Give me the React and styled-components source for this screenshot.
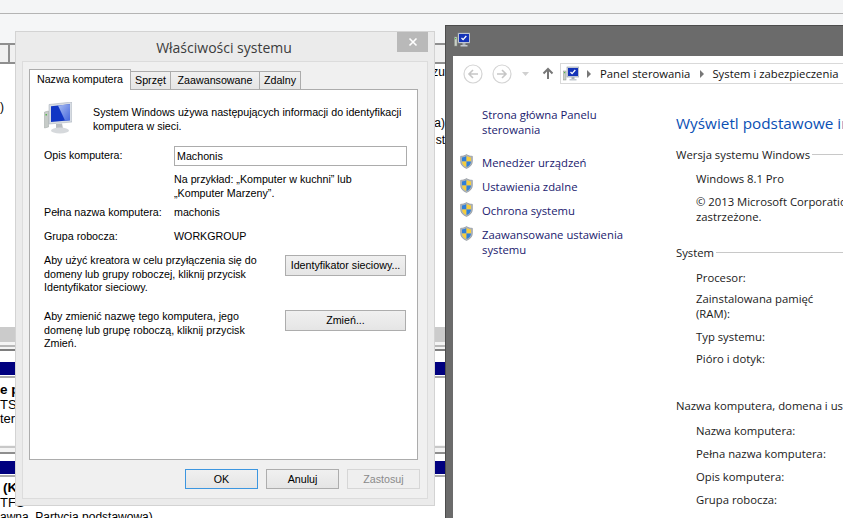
import styled, { createGlobalStyle } from 'styled-components';

const Global = createGlobalStyle`
  html, body {
    margin: 0;
    padding: 0;
    background: #fff;
  }
  #root {
    width: 843px;
    height: 518px;
    overflow: hidden;
  }
`;

const Desktop = styled.div`
  position: relative;
  width: 843px;
  height: 518px;
  overflow: hidden;
  font-family: "Liberation Sans", Arial, sans-serif;
  font-size: 10.7px;
  color: #000;
`;

/* the window left open behind the two others */
const BackWindow = styled.div`
  display: flex;
  flex-direction: column;
  height: 100%;
  background: #fff;
`;

const TopStrip = styled.div`
  height: 13px;
  background: #f4f5f6;
  border-bottom: 1px solid #b4b4b4;
`;

const MenuBand = styled.div`
  height: 29px;
  background: #f5f6f7;
`;

const ColumnHeaders = styled.div`
  display: flex;
  height: 17px;
  border-top: 2px solid #8f8f8f;
  border-bottom: 2px solid #8f8f8f;
`;

const ColumnHeader = styled.div`
  width: ${p => p.$width}px;
  background: #f0f0f0;
  border-right: 2px solid #8f8f8f;
  flex: ${p => (p.$grow ? 1 : 'none')};
`;

const ListArea = styled.div`
  display: flex;
  justify-content: space-between;
  height: 263px;
  padding-right: 398px;
  font-size: 12px;
`;

const ListLeft = styled.div`
  padding-top: 36px;
  line-height: 15px;
`;

const ListRight = styled.div`
  display: flex;
  flex-direction: column;
  align-items: flex-end;
  line-height: 15px;
  gap: 36px;
  padding-top: 1px;
`;

const ListRightPair = styled.div`
  display: flex;
  flex-direction: column;
  align-items: flex-end;
  gap: 2px;
`;

const GreyBand = styled.div`
  height: 15px;
  background: #cbcbcb;
`;

const PartBar = styled.div`
  height: ${p => p.$height}px;
  border-bottom: 2px solid ${p => p.$line};
  background: #f4f4f4;
`;

const DiskBar = styled.div`
  height: 13px;
  background: #00007f;
`;

const DiskRule = styled.div`
  height: 2px;
  background: #ababab;
  margin-top: 1px;
`;

const DiskInfo = styled.div`
  height: ${p => p.$height}px;
  padding-top: ${p => p.$top || 0}px;
  font-size: 13px;
  line-height: 14.5px;
  box-sizing: border-box;
`;

const DiskTitle = styled.div`
  font-weight: bold;
  font-size: 13.5px;
  margin-left: ${p => p.$shift}px;
`;

const DiskLine = styled.div`
  white-space: nowrap;
  font-size: ${p => p.$size || 13}px;
`;

/* system properties dialog */
const Dialog = styled.div`
  position: absolute;
  left: 15px;
  top: 31px;
  width: 420px;
  height: 475px;
  box-sizing: border-box;
  display: flex;
  flex-direction: column;
  background: #ebebeb;
  border: 1px solid #d3d3d3;
`;

const DialogTitleBar = styled.div`
  position: relative;
  height: 29px;
  display: flex;
  align-items: center;
  justify-content: center;
  flex: none;
  font-family: "Open Sans", sans-serif;
  font-size: 14px;
  color: #3c3c3c;
  padding-right: 2px;
  padding-top: 1px;
  box-sizing: border-box;
`;

const CloseButton = styled.div`
  position: absolute;
  right: 6px;
  top: 0;
  width: 31px;
  height: 20px;
  background: #b9b9b9;
  display: flex;
  align-items: center;
  justify-content: center;
`;

const DialogFrame = styled.div`
  flex: 1;
  margin: 0 6px 6px;
  padding: 7px 9px 0 6px;
  background: #f0f0f0;
  border: 1px solid #dcdcdc;
  display: flex;
  flex-direction: column;
`;

const TabRow = styled.div`
  display: flex;
  align-items: flex-end;
  height: 21px;
  position: relative;
  z-index: 1;
  margin-bottom: -1px;
`;

const Tab = styled.div`
  box-sizing: border-box;
  height: ${p => (p.$active ? 21 : 19)}px;
  width: ${p => p.$width}px;
  margin-left: ${p => (p.$active ? 0 : -1)}px;
  border: 1px solid #acacac;
  border-bottom: ${p => (p.$active ? 'none' : '1px solid #acacac')};
  background: ${p => (p.$active ? '#fff' : 'linear-gradient(#f0f0f0, #e5e5e5)')};
  text-align: center;
  line-height: ${p => (p.$active ? 18 : 17)}px;
  position: relative;
  z-index: ${p => (p.$active ? 2 : 0)};
`;

const TabPanel = styled.div`
  height: 371px;
  box-sizing: border-box;
  background: #fff;
  border: 1px solid #acacac;
  padding: 16px 10px 0 14px;
  line-height: 13.5px;
`;

const IntroRow = styled.div`
  display: flex;
  gap: 21px;
  margin-bottom: 12px;
  white-space: nowrap;
`;

const ComputerArt = styled.svg`
  width: 28px;
  height: 32px;
  flex: none;
  margin-top: -4px;
`;

const FieldRow = styled.div`
  display: grid;
  grid-template-columns: 130px 1fr;
  align-items: center;
  margin-bottom: ${p => p.$gap || 0}px;
`;

const TextField = styled.div`
  height: 20px;
  box-sizing: border-box;
  border: 1px solid #acacac;
  padding-left: 2px;
  line-height: 18px;
`;

const Hint = styled.div`
  margin-left: 130px;
  line-height: 14px;
  margin-bottom: 6px;
`;

const ActionRow = styled.div`
  display: grid;
  grid-template-columns: 241px 121px;
  margin-bottom: 15.5px;
  align-items: start;
  white-space: nowrap;
`;

const PushButton = styled.div`
  box-sizing: border-box;
  height: ${p => p.$height || 20}px;
  border: 1px solid ${p => (p.$disabled ? '#d6d6d6' : p.$primary ? '#3c96e0' : '#adadad')};
  background: ${p => (p.$disabled ? '#efefef' : 'linear-gradient(#f0f0f0, #e5e5e5)')};
  color: ${p => (p.$disabled ? '#8a8a8a' : '#000')};
  text-align: center;
  line-height: ${p => (p.$height || 20) - 2}px;
  margin-top: ${p => p.$offset || 0}px;
`;

const DialogButtons = styled.div`
  display: grid;
  grid-template-columns: repeat(3, 73px);
  gap: 8px;
  justify-content: end;
  margin: 9px -2px 0 0;
`;

/* control panel window */
const PanelWindow = styled.div`
  position: absolute;
  left: 445px;
  top: 25px;
  width: 420px;
  height: 493px;
  box-sizing: border-box;
  background: #6b6b6b;
  border-left: 1px solid #4c4c4c;
  border-top: 1px solid #4c4c4c;
  padding-left: 7px;
  display: flex;
  flex-direction: column;
  font-family: "Open Sans", sans-serif;
  font-size: 11.3px;
  color: #1a1a1a;
`;

const PanelTitle = styled.div`
  height: 30px;
  flex: none;
  display: flex;
  align-items: flex-start;
  padding: 6px 0 0 1px;
  box-sizing: border-box;
`;

const PanelBody = styled.div`
  flex: 1;
  background: #fff;
  display: flex;
  flex-direction: column;
  overflow: hidden;
`;

const NavBar = styled.div`
  display: flex;
  align-items: center;
  height: 21px;
  margin-top: 7px;
  padding-left: 10px;
  flex: none;

  > * {
    flex: none;
  }
`;

const NavCircle = styled.svg`
  width: 20px;
  height: 20px;
  margin-right: ${p => p.$gap}px;
`;

const AddressBar = styled.div`
  box-sizing: border-box;
  width: 320px;
  height: 21px;
  margin-left: 6px;
  border: 1px solid #d9d9d9;
  display: flex;
  align-items: center;
  padding-left: 2px;
  white-space: nowrap;
  color: #111;
`;

const Crumb = styled.span`
  margin-right: 7px;
`;

const CrumbArrow = styled.span`
  width: 0;
  height: 0;
  margin: 0 ${p => (p.$first ? 9 : 8)}px 0 ${p => (p.$first ? 8 : 3)}px;
  border-left: 4px solid #777;
  border-top: 4px solid transparent;
  border-bottom: 4px solid transparent;
`;

const PanelColumns = styled.div`
  display: flex;
  flex: 1;
`;

const SideBar = styled.nav`
  width: 223px;
  flex: none;
  box-sizing: border-box;
  padding: 23px 20px 0 7px;
  color: #1a1a6e;
  line-height: 15px;
`;

const SideHome = styled.div`
  padding-left: 22px;
  margin-bottom: 18px;
  width: 140px;
`;

const SideLink = styled.div`
  display: flex;
  gap: 9px;
  margin-bottom: 9px;
  width: 190px;
`;

const Shield = styled.svg`
  width: 13px;
  height: 15px;
  flex: none;
  margin-top: -1px;
`;

const MainContent = styled.main`
  width: 340px;
  flex: none;
  padding-top: 27px;
  line-height: 15px;
  white-space: nowrap;
`;

const MainHeading = styled.h1`
  margin: 0 0 11.5px;
  font-size: 15.3px;
  font-weight: 400;
  line-height: 24px;
  color: #0a50b4;
`;

const SectionHead = styled.div`
  display: flex;
  align-items: center;
  gap: 2px;
  margin-bottom: ${p => p.$gap}px;

  &::after {
    content: '';
    flex: 1;
    height: 1px;
    background: #c8c8c8;
  }
`;

const InfoBlock = styled.div`
  padding-left: 20px;
  margin-bottom: ${p => p.$gap}px;
`;

const InfoLine = styled.div`
  margin-bottom: ${p => p.$gap ?? 8}px;
  width: ${p => p.$width || 'auto'};
  white-space: ${p => (p.$wrap ? 'normal' : 'nowrap')};
`;

const ComputerSmall = ({ size = 16 }) => (
  <svg width={size} height={size} viewBox="0 0 16 16" style={{ flex: 'none' }}>
    <rect x="0.5" y="5" width="2.5" height="9" fill="#c9cfc6" stroke="#8d948c" strokeWidth="0.5" />
    <rect x="1" y="6" width="1.2" height="1.2" fill="#4fb848" />
    <rect x="4" y="1" width="12" height="10" fill="#d5dbe3" stroke="#8b95a5" strokeWidth="0.6" />
    <rect x="5" y="2" width="10" height="8" fill="#1433b8" />
    <path d="M7.5 6l1.6 1.6 3.2-3.6" fill="none" stroke="#fff" strokeWidth="1.3" />
    <rect x="8.5" y="11" width="3" height="2" fill="#a9b0b8" />
    <rect x="6.5" y="13" width="7" height="1.5" fill="#c4c9cf" />
  </svg>
);

const ShieldIcon = () => (
  <Shield viewBox="0 0 13 15">
    <path d="M6.5 0.5C4.8 1.7 2.8 2.2 0.6 2.3V7.5c0 3.2 2.4 5.6 5.9 7 3.5-1.4 5.9-3.8 5.9-7V2.3C10.2 2.2 8.2 1.7 6.5 0.5z" fill="#aeb4ba" stroke="#7b8188" strokeWidth="0.5" />
    <path d="M6.5 2C5.2 2.8 3.6 3.3 2 3.4V7.5h4.5z" fill="#2f7fd8" />
    <path d="M6.5 2c1.3.8 2.9 1.3 4.5 1.4V7.5H6.5z" fill="#f6cd3c" />
    <path d="M2 7.5h4.5v5.6C4 12 2 10.2 2 7.5z" fill="#f6cd3c" />
    <path d="M11 7.5H6.5v5.6C9 12 11 10.2 11 7.5z" fill="#2f7fd8" />
  </Shield>
);

const NavButton = ({ flip, gap }) => (
  <NavCircle viewBox="0 0 20 20" $gap={gap}>
    <circle cx="10" cy="10" r="9" fill="#fff" stroke="#d4d4d4" strokeWidth="1.2" />
    <path
      d={flip ? 'M5 10h9M10 6l4 4-4 4' : 'M15 10H6M10 6l-4 4 4 4'}
      fill="none"
      stroke="#c6c6c6"
      strokeWidth="1.6"
    />
  </NavCircle>
);

const Monitor = () => (
  <ComputerArt viewBox="0 0 28 32">
    <defs>
      <linearGradient id="screenShine" x1="0" y1="0" x2="1" y2="1">
        <stop offset="0" stopColor="#a9bdf2" />
        <stop offset="1" stopColor="#4668dc" />
      </linearGradient>
    </defs>
    <path d="M0.5 10l4-1v16l-4 1z" fill="#c6cbc8" stroke="#9ca3a0" strokeWidth="0.5" />
    <rect x="1.5" y="12" width="1.5" height="1.5" fill="#58b84f" />
    <path d="M5 2.5L28 0v20L5 22z" fill="#d8dde4" stroke="#a1a8b3" strokeWidth="0.5" />
    <path d="M7 4.2L26 2.2v16L7 20z" fill="#1136c4" />
    <path d="M14 3.5l12-1.3v16l-5 .4z" fill="url(#screenShine)" />
    <path d="M12 22l6-.5 1 5-7 .5z" fill="#b9bdc2" />
    <ellipse cx="16" cy="28.5" rx="9" ry="3" fill="#d6d9dc" />
  </ComputerArt>
);

export default function App() {
  return (
    <Desktop>
      <Global />
      <BackWindow>
        <TopStrip />
        <MenuBand />
        <ColumnHeaders>
          <ColumnHeader $width={8} />
          <ColumnHeader $grow />
        </ColumnHeaders>
        <ListArea>
          <ListLeft>)</ListLeft>
          <ListRight>
            <div>zu</div>
            <ListRightPair>
              <div>a)</div>
              <div>st</div>
            </ListRightPair>
          </ListRight>
        </ListArea>
        <GreyBand />
        <PartBar $height={3} $line="#b8b8b8" />
        <PartBar $height={2} $line="#7e7e7e" />
        <DiskInfo $height={11} />
        <DiskBar />
        <DiskRule />
        <DiskInfo $height={67} $top={5}>
          <DiskTitle $shift={0}>e p</DiskTitle>
          <DiskLine>TS</DiskLine>
          <DiskLine>ter</DiskLine>
        </DiskInfo>
        <PartBar $height={1} $line="#c8c8c8" />
        <PartBar $height={4} $line="#8e8e8e" />
        <DiskInfo $height={7} />
        <DiskBar />
        <DiskRule />
        <DiskInfo $height={41} $top={4}>
          <DiskTitle $shift={3}>(K</DiskTitle>
          <DiskLine>TFS</DiskLine>
          <DiskLine $size={12}>awna, Partycja podstawowa)</DiskLine>
        </DiskInfo>
      </BackWindow>

      <Dialog>
        <DialogTitleBar>
          Właściwości systemu
          <CloseButton>
            <svg width="10" height="10" viewBox="0 0 10 10">
              <path d="M1.5 1.5l7 7M8.5 1.5l-7 7" stroke="#fff" strokeWidth="1.6" />
            </svg>
          </CloseButton>
        </DialogTitleBar>
        <DialogFrame>
          <TabRow>
            <Tab $active $width={102}>Nazwa komputera</Tab>
            <Tab $width={41}>Sprzęt</Tab>
            <Tab $width={90}>Zaawansowane</Tab>
            <Tab $width={42}>Zdalny</Tab>
          </TabRow>
          <TabPanel>
            <IntroRow>
              <Monitor />
              <div>
                System Windows używa następujących informacji do identyfikacji<br />
                komputera w sieci.
              </div>
            </IntroRow>
            <FieldRow $gap={6}>
              <span>Opis komputera:</span>
              <TextField>Machonis</TextField>
            </FieldRow>
            <Hint>
              Na przykład: „Komputer w kuchni” lub<br />
              „Komputer Marzeny”.
            </Hint>
            <FieldRow $gap={10}>
              <span>Pełna nazwa komputera:</span>
              <span>machonis</span>
            </FieldRow>
            <FieldRow $gap={11}>
              <span>Grupa robocza:</span>
              <span>WORKGROUP</span>
            </FieldRow>
            <ActionRow>
              <div>
                Aby użyć kreatora w celu przyłączenia się do<br />
                domeny lub grupy roboczej, kliknij przycisk<br />
                Identyfikator sieciowy.
              </div>
              <PushButton $height={21} $offset={1}>Identyfikator sieciowy...</PushButton>
            </ActionRow>
            <ActionRow>
              <div>
                Aby zmienić nazwę tego komputera, jego<br />
                domenę lub grupę roboczą, kliknij przycisk<br />
                Zmień.
              </div>
              <PushButton $height={21}>Zmień...</PushButton>
            </ActionRow>
          </TabPanel>
          <DialogButtons>
            <PushButton $primary>OK</PushButton>
            <PushButton>Anuluj</PushButton>
            <PushButton $disabled>Zastosuj</PushButton>
          </DialogButtons>
        </DialogFrame>
      </Dialog>

      <PanelWindow>
        <PanelTitle>
          <ComputerSmall />
        </PanelTitle>
        <PanelBody>
          <NavBar>
            <NavButton gap={9} />
            <NavButton flip gap={10} />
            <svg width="7" height="4" viewBox="0 0 7 4" style={{ marginRight: 13 }}>
              <path d="M0 0h7L3.5 4z" fill="#d0d0d0" />
            </svg>
            <svg width="12" height="13" viewBox="0 0 12 13">
              <path d="M6 12V2M1.5 6.5L6 2l4.5 4.5" fill="none" stroke="#777" strokeWidth="2" />
            </svg>
            <AddressBar>
              <ComputerSmall />
              <CrumbArrow $first />
              <Crumb>Panel sterowania</Crumb>
              <CrumbArrow />
              <Crumb>System i zabezpieczenia</Crumb>
            </AddressBar>
          </NavBar>
          <PanelColumns>
            <SideBar>
              <SideHome>Strona główna Panelu sterowania</SideHome>
              <SideLink><ShieldIcon />Menedżer urządzeń</SideLink>
              <SideLink><ShieldIcon />Ustawienia zdalne</SideLink>
              <SideLink><ShieldIcon />Ochrona systemu</SideLink>
              <SideLink><ShieldIcon /><span>Zaawansowane ustawienia<br />systemu</span></SideLink>
            </SideBar>
            <MainContent>
              <MainHeading>Wyświetl podstawowe informacje o komputerze</MainHeading>
              <SectionHead $gap={9}>Wersja systemu Windows</SectionHead>
              <InfoBlock $gap={21}>
                <InfoLine>Windows 8.1 Pro</InfoLine>
                <InfoLine>© 2013 Microsoft Corporation. Wszelkie prawa<br />zastrzeżone.</InfoLine>
              </InfoBlock>
              <SectionHead $gap={10}>System</SectionHead>
              <InfoBlock $gap={32}>
                <InfoLine $gap={6}>Procesor:</InfoLine>
                <InfoLine $wrap $width="130px">Zainstalowana pamięć (RAM):</InfoLine>
                <InfoLine $gap={7}>Typ systemu:</InfoLine>
                <InfoLine>Pióro i dotyk:</InfoLine>
              </InfoBlock>
              <SectionHead $gap={10}>Nazwa komputera, domena i ustawienia grupy roboczej</SectionHead>
              <InfoBlock $gap={0}>
                <InfoLine>Nazwa komputera:</InfoLine>
                <InfoLine>Pełna nazwa komputera:</InfoLine>
                <InfoLine>Opis komputera:</InfoLine>
                <InfoLine>Grupa robocza:</InfoLine>
              </InfoBlock>
            </MainContent>
          </PanelColumns>
        </PanelBody>
      </PanelWindow>
    </Desktop>
  );
}
